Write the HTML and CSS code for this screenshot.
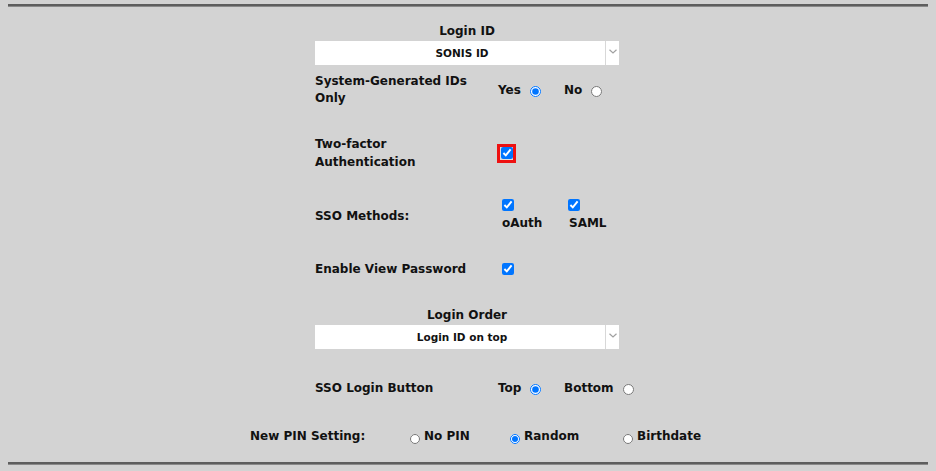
FILE: index.html
```html
<!DOCTYPE html>
<html>
<head>
<meta charset="utf-8">
<link rel="stylesheet" href="styles.css">
</head>
<body>
<div class="page">
  <div class="rule rule-top"></div>
  <div class="form">
    <div class="heading">Login ID</div>
    <div class="select">
      <div class="select-value">SONIS ID</div>
      <div class="select-arrow"><svg width="8" height="5" viewBox="0 0 8 5"><path d="M0.5 0.8 L4 4 L7.5 0.8" fill="none" stroke="#a0a0a0" stroke-width="1.2"/></svg></div>
    </div>

    <div class="row row-sysgen">
      <div class="label">System-Generated IDs<br>Only</div>
      <div class="opts">
        <label class="opt"><span>Yes</span><input type="radio" name="sg" checked></label>
        <label class="opt"><span>No</span><input type="radio" name="sg"></label>
      </div>
    </div>

    <div class="row row-2fa">
      <div class="label">Two-factor<br>Authentication</div>
      <div class="opts">
        <span class="highlight"><input type="checkbox" class="cb" checked></span>
      </div>
    </div>

    <div class="row row-sso">
      <div class="label">SSO Methods:</div>
      <div class="opts opts-sso">
        <label class="stack"><input type="checkbox" class="cb" checked><span>oAuth</span></label>
        <label class="stack stack-2"><input type="checkbox" class="cb" checked><span>SAML</span></label>
      </div>
    </div>

    <div class="row row-view">
      <div class="label">Enable View Password</div>
      <div class="opts">
        <input type="checkbox" class="cb cb-view" checked>
      </div>
    </div>

    <div class="heading heading-order">Login Order</div>
    <div class="select">
      <div class="select-value">Login ID on top</div>
      <div class="select-arrow"><svg width="8" height="5" viewBox="0 0 8 5"><path d="M0.5 0.8 L4 4 L7.5 0.8" fill="none" stroke="#a0a0a0" stroke-width="1.2"/></svg></div>
    </div>

    <div class="row row-ssobtn">
      <div class="label">SSO Login Button</div>
      <div class="opts">
        <label class="opt"><span>Top</span><input type="radio" name="sb" checked></label>
        <label class="opt"><span>Bottom</span><input type="radio" name="sb"></label>
      </div>
    </div>
  </div>

  <div class="pin-row">
    <div class="pin-label">New PIN Setting:</div>
    <label class="pin-opt"><input type="radio" name="pin"><span>No PIN</span></label>
    <label class="pin-opt"><input type="radio" name="pin" checked><span>Random</span></label>
    <label class="pin-opt"><input type="radio" name="pin"><span>Birthdate</span></label>
  </div>
  <div class="rule rule-bottom"></div>
</div>
</body>
</html>
```
FILE: styles.css
```css
html, body {
  margin: 0;
  padding: 0;
  background: #d3d3d3;
}
body {
  width: 936px;
  height: 471px;
  overflow: hidden;
  font-family: "DejaVu Sans", "Lato", sans-serif;
  font-weight: 700;
  font-size: 12px;
  color: #111;
}
.page {
  padding: 4px 8px 0;
}
.rule {
  height: 2px;
  background: #5e5e5e;
  border-bottom: 1px solid #8a8a8a;
}
.form {
  width: 304px;
  margin: 0 auto;
  position: relative;
  left: -1px;
}
.heading {
  text-align: center;
  line-height: 18px;
  margin-top: 15px;
}
.heading-order {
  margin-top: 28px;
}
.select {
  margin-top: 1px;
  height: 24px;
  background: #fff;
  display: flex;
  align-items: stretch;
}
.select-value {
  flex: 1;
  text-align: center;
  line-height: 24px;
  font-size: 10.5px;
  padding-left: 4px;
}
.select-arrow {
  width: 13px;
  border-left: 1px solid #d8d8d8;
  display: flex;
  align-items: center;
  justify-content: center;
  padding-bottom: 4px;
}
.row {
  display: grid;
  grid-template-columns: 183px 1fr;
  align-items: center;
}
.label { line-height: 18px; }
.row-sysgen { margin-top: 8px; }
.row-sysgen .label { line-height: 17px; }
.row-2fa { margin-top: 28px; }
.row-sso { margin-top: 28px; }
.row-view { margin-top: 28px; }
.row-ssobtn { margin-top: 30px; }
.opts {
  display: grid;
  grid-template-columns: 66px auto;
  align-items: center;
}
.opt {
  display: flex;
  align-items: center;
}
.opt input {
  margin: 2px 0 0 9px;
  width: 11px;
  height: 11px;
}
.cb {
  width: 12px;
  height: 12px;
  margin: 0;
}
.highlight {
  display: inline-flex;
  width: 13px;
  height: 13px;
  border: 3px solid #ee1111;
  margin-left: -1px;
  padding: 0;
  align-items: center;
  justify-content: center;
  background: #e0e0e0;
}
.opts-sso {
  grid-template-columns: 67px auto;
}
.stack {
  display: flex;
  flex-direction: column;
  align-items: flex-start;
  line-height: 18px;
  padding-left: 4px;
}
.stack span {
  margin-top: 3px;
}
.stack-2 {
  padding-left: 3px;
}
.stack-2 span { margin-left: 1px; }
.cb-view {
  margin-left: 4px;
}
.pin-row {
  display: grid;
  grid-template-columns: 160px 100px 113px auto;
  margin-top: 30px;
  padding-left: 242px;
  line-height: 18px;
}
.pin-opt {
  display: flex;
  align-items: center;
}
.pin-opt input {
  width: 10px;
  height: 10px;
  margin: 5px 4px 0 0;
}
.rule-bottom {
  margin-top: 17px;
}
```
